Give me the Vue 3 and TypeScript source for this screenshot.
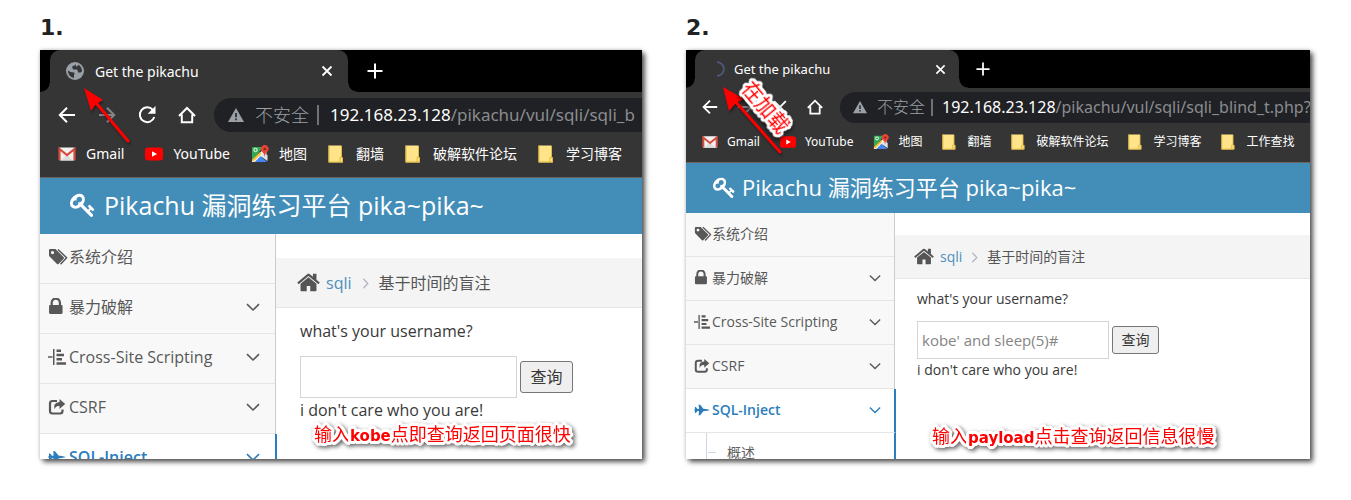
<script setup lang="ts">
interface Bookmark {
  icon: string
  label: string
}

interface Panel {
  id: string
  size: 'large' | 'small'
  heading: string
  loading: boolean
  path: string
  hint: string
  bookmarks: Bookmark[]
  caption: [string, string, string]
}

const baseBookmarks: Bookmark[] = [
  { icon: 'gmail', label: 'Gmail' },
  { icon: 'youtube', label: 'YouTube' },
  { icon: 'maps', label: '地图' },
  { icon: 'folder', label: '翻墙' },
  { icon: 'folder', label: '破解软件论坛' },
  { icon: 'folder', label: '学习博客' },
]

const panels: Panel[] = [
  {
    id: 'fast',
    size: 'large',
    heading: '1.',
    loading: false,
    path: '/pikachu/vul/sqli/sqli_b',
    hint: '',
    bookmarks: baseBookmarks,
    caption: ['输入', 'kobe', '点即查询返回页面很快'],
  },
  {
    id: 'slow',
    size: 'small',
    heading: '2.',
    loading: true,
    path: '/pikachu/vul/sqli/sqli_blind_t.php?n',
    hint: "kobe' and sleep(5)#",
    bookmarks: [...baseBookmarks, { icon: 'folder', label: '工作查找' }],
    caption: ['输入', 'payload', '点击查询返回信息很慢'],
  },
]

const menu = [
  { icon: 'tags', label: '系统介绍', open: false, expands: false },
  { icon: 'lock', label: '暴力破解', open: false, expands: true },
  { icon: 'indent', label: 'Cross-Site Scripting', open: false, expands: true },
  { icon: 'share', label: 'CSRF', open: false, expands: true },
  { icon: 'jet', label: 'SQL-Inject', open: true, expands: true },
]
</script>

<template>
  <svg class="sprite" aria-hidden="true">
    <symbol id="i-globe" viewBox="0 0 18 18">
      <circle cx="9" cy="9" r="9" fill="#9aa0a6" />
      <path d="M2 8.500Q4 10.500 8 10.500Q9.500 11.500 8 13V16Q3 15 2 10ZM10 2Q9 4 6.500 4Q5.500 6 7.500 7.500H11Q12 8.500 12 10.500H14.500L16 9.500Q16 5 12.500 2.800Q11.500 5 9.800 4.500Z" fill="#35363a" />
    </symbol>
    <symbol id="i-spinner" viewBox="0 0 18 18">
      <path d="M9 1.200A7.800 7.800 0 0 1 9 16.800" fill="none" stroke="#4c5a78" stroke-width="2" />
    </symbol>
    <symbol id="i-close" viewBox="0 0 12 12">
      <path d="M1.500 1.500L10.500 10.500M10.500 1.500L1.500 10.500" fill="none" stroke="currentColor" stroke-width="1.800" />
    </symbol>
    <symbol id="i-plus" viewBox="0 0 16 16">
      <path d="M8 .5V15.500M.5 8H15.500" fill="none" stroke="currentColor" stroke-width="2" />
    </symbol>
    <symbol id="i-back" viewBox="0 0 20 20">
      <path d="M18 10H3M10 2.800L2.800 10L10 17.200" fill="none" stroke="currentColor" stroke-width="2" />
    </symbol>
    <symbol id="i-forward" viewBox="0 0 20 20">
      <path d="M2 10H17M10 2.800L17.200 10L10 17.200" fill="none" stroke="#85868a" stroke-width="2" />
    </symbol>
    <symbol id="i-reload" viewBox="0 0 20 20">
      <path d="M15.800 4.800A7.400 7.400 0 1 0 17.300 12" fill="none" stroke="currentColor" stroke-width="2" />
      <path d="M18.500 1V8.800H10.700Z" fill="currentColor" />
    </symbol>
    <symbol id="i-stop" viewBox="0 0 20 20">
      <path d="M3.500 3.500L16.500 16.500M16.500 3.500L3.500 16.500" fill="none" stroke="currentColor" stroke-width="2" />
    </symbol>
    <symbol id="i-house" viewBox="0 0 20 20">
      <path d="M2 11L10 3L18 11M4.800 9.500V17.300H15.200V9.500" fill="none" stroke="currentColor" stroke-width="2" />
    </symbol>
    <symbol id="i-warning" viewBox="0 0 16 16">
      <path d="M8 1L16 15H0Z" fill="#9aa0a6" />
      <path d="M8 6V10.200M8 11.500V13.200" stroke="#202124" stroke-width="1.600" />
    </symbol>
    <symbol id="i-gmail" viewBox="0 0 18 18">
      <rect x="1" y="2.500" width="16" height="13" rx="1" fill="#f2f2f2" />
      <path d="M3 15.500L9 9.500L15 15.500Z" fill="#dcdcdc" />
      <path d="M1.500 15V4L9 10L16.500 4V15" fill="none" stroke="#d54b3d" stroke-width="2.200" />
    </symbol>
    <symbol id="i-youtube" viewBox="0 0 18 18">
      <rect y="2.500" width="18" height="13" rx="3.200" fill="#f00" />
      <path d="M7 6.200V11.800L12 9Z" fill="#fff" />
    </symbol>
    <symbol id="i-maps" viewBox="0 0 18 18">
      <path d="M1 2H12L6 10L1 15Z" fill="#34a853" />
      <path d="M1 15L13 4L16 8L4 17H1Z" fill="#f1f3f4" />
      <path d="M4 17L9.500 11L16 17Z" fill="#4285f4" />
      <path d="M9.500 11L13 8L16.500 10V16Z" fill="#e2e5e8" />
      <path d="M1 15L9 7L10.500 8.500L2 17Z" fill="#fbc02d" />
      <circle cx="4.500" cy="5" r="1.700" fill="none" stroke="#fff" />
      <path d="M13.500 12Q13.500 8.500 11 6.500A3.800 3.800 0 1 1 16.500 6.500Q13.800 8.500 13.500 12Z" fill="#ea4335" />
      <circle cx="13.800" cy="4" r="1.300" fill="#8c251c" />
    </symbol>
    <symbol id="i-folder" viewBox="0 0 18 18">
      <path d="M.5 .5H13.500V12.500H15V17.500H.5Z" fill="#ffe48a" />
      <path d="M1 .5V17H14.500V12.500H12V17M13.500 1V12" fill="none" stroke="#e3b93c" />
    </symbol>
    <symbol id="i-key" viewBox="0 0 1792 1792">
      <path fill="currentColor" d="M832 512q0-80-56-136t-136-56-136 56-56 136q0 42 19 83-41-19-83-19-80 0-136 56t-56 136 56 136 136 56 136-56 56-136q0-42-19-83 41 19 83 19 80 0 136-56t56-136zm851 704q0 17-49 66t-66 49q-9 0-28.500-16t-36.500-33-38.500-40-24.500-26l-96 96 220 220q28 28 28 68 0 42-39 81t-81 39q-40 0-68-28l-671-671q-176 131-365 131-163 0-265.500-102.500t-102.500-265.500q0-160 95-313t248-248 313-95q163 0 265.500 102.500t102.500 265.500q0 189-131 365l355 355 96-96q-3-3-26-24.500t-40-38.500-33-36.500-16-28.500q0-17 49-66t66-49q13 0 23 10 6 6 46 44.500t82 79.500 86.500 86 73 78 28.500 41z" />
    </symbol>
    <symbol id="i-home" viewBox="64 224 1664 1344">
      <path fill="currentColor" d="M1472 992v480q0 26-19 45t-45 19h-384v-384h-256v384h-384q-26 0-45-19t-19-45v-480q0-1 .5-3t.5-3l575-474 575 474q1 2 1 6zm223-69l-62 74q-8 9-21 11h-3q-13 0-21-7l-692-577-692 577q-12 8-24 7-13-2-21-11l-62-74q-8-10-7-23.500t11-21.500l719-599q32-26 76-26t76 26l244 204v-195q0-14 9-23t23-9h192q14 0 23 9t9 23v408l219 182q10 8 11 21.500t-7 23.500z" />
    </symbol>
    <symbol id="i-lock" viewBox="230 180 1344 1536" preserveAspectRatio="xMinYMid meet">
      <path fill="currentColor" d="M640 768h512v-192q0-106-75-181t-181-75-181 75-75 181v192zm832 96v576q0 40-28 68t-68 28h-960q-40 0-68-28t-28-68v-576q0-40 28-68t68-28h32v-192q0-184 132-316t316-132 316 132 132 316v192h32q40 0 68 28t28 68z" />
    </symbol>
    <symbol id="i-tags" viewBox="0 0 20 18" preserveAspectRatio="xMinYMid meet">
      <path fill="currentColor" fill-rule="evenodd" d="M1 2Q1 1 2 1H7.500L15.700 9.200Q16.300 10 15.700 10.700L10.500 16Q9.700 16.700 9 16L1.800 8.800Q1 8 1 7ZM4.500 3A1.600 1.600 0 1 0 4.500 6.200A1.600 1.600 0 1 0 4.500 3Z" />
      <path d="M10 1.500L18.600 9.700L12.500 16.300" fill="none" stroke="currentColor" stroke-width="1.500" />
    </symbol>
    <symbol id="i-indent" viewBox="0 0 18 18" preserveAspectRatio="xMinYMid meet">
      <path fill="currentColor" d="M0 8.200H4.500V9.800H0ZM5 1H6.500V17H5ZM8.500 1.500H13V4H8.500ZM8.500 5.700H16V8.200H8.500ZM8.500 10H14V12.500H8.500ZM8.500 14.200H18V16.700H8.500Z" />
    </symbol>
    <symbol id="i-share" viewBox="0 0 18 18" preserveAspectRatio="xMinYMid meet">
      <path d="M9 3H4.500Q2 3 2 5.500V13Q2 15.500 4.500 15.500H12Q14.500 15.500 14.500 13V11.500" fill="none" stroke="currentColor" stroke-width="2.200" />
      <path d="M11.500 1L17.200 6L11.500 11V8Q7.500 7.500 6.500 11.500Q4.500 4.500 11.500 4Z" fill="currentColor" />
    </symbol>
    <symbol id="i-jet" viewBox="0 0 18 18" preserveAspectRatio="xMinYMid meet">
      <path fill="currentColor" d="M1 5.500H2L4 7.800H5.500V4H5V3.200H7L10.500 7.600L15 8.200L18 9L15 9.800L10.500 10.400L7 14.800H5V14H5.500V10.200H4L2 12.500H1V9.900H.5V8.100H1Z" />
    </symbol>
    <symbol id="i-chevron" viewBox="0 0 14 14">
      <path d="M1 4.200L7 10L13 4.200" fill="none" stroke="currentColor" stroke-width="1.600" />
    </symbol>
  </svg>

  <main class="page">
    <section v-for="p in panels" :key="p.id" class="panel" :class="p.size">
      <h2 class="heading">{{ p.heading }}</h2>
      <div class="frame">
        <div class="screen">
          <div class="tabs">
            <div class="tab">
              <svg class="favicon"><use :href="p.loading ? '#i-spinner' : '#i-globe'" /></svg>
              <span class="tab-title">Get the pikachu</span>
              <button class="plain" type="button" aria-label="Close tab">
                <svg class="close"><use href="#i-close" /></svg>
              </button>
            </div>
            <button class="plain" type="button" aria-label="New tab">
              <svg class="plus"><use href="#i-plus" /></svg>
            </button>
          </div>

          <div class="toolbar">
            <div class="nav">
              <button class="plain" type="button" aria-label="Back"><svg><use href="#i-back" /></svg></button>
              <button class="plain" type="button" aria-label="Forward"><svg><use href="#i-forward" /></svg></button>
              <button class="plain" type="button" :aria-label="p.loading ? 'Stop' : 'Reload'">
                <svg><use :href="p.loading ? '#i-stop' : '#i-reload'" /></svg>
              </button>
              <button class="plain" type="button" aria-label="Home"><svg><use href="#i-house" /></svg></button>
            </div>
            <div class="address">
              <svg class="warning"><use href="#i-warning" /></svg>
              <span class="insecure">不安全</span>
              <span class="url"><b>192.168.23.128</b>{{ p.path }}</span>
            </div>
          </div>

          <nav class="bookmarks" aria-label="Bookmarks">
            <a v-for="b in p.bookmarks" :key="b.label" href="#">
              <svg><use :href="'#i-' + b.icon" /></svg>{{ b.label }}
            </a>
          </nav>

          <header class="banner">
            <svg><use href="#i-key" /></svg>
            <span>Pikachu 漏洞练习平台 pika~pika~</span>
          </header>

          <div class="body">
            <aside class="sidebar">
              <a v-for="m in menu" :key="m.label" href="#" class="item" :class="{ open: m.open }">
                <svg class="item-icon"><use :href="'#i-' + m.icon" /></svg>
                <span class="item-label">{{ m.label }}</span>
                <svg v-if="m.expands" class="chevron"><use href="#i-chevron" /></svg>
              </a>
              <div v-if="p.loading" class="submenu"><a href="#">概述</a></div>
            </aside>

            <div class="content">
              <div class="crumbs">
                <svg class="crumb-home"><use href="#i-home" /></svg>
                <a href="#">sqli</a>
                <svg class="crumb-sep"><use href="#i-chevron" /></svg>
                <span>基于时间的盲注</span>
              </div>
              <form class="query" @submit.prevent>
                <label :for="'name-' + p.id">what's your username?</label>
                <div class="fields">
                  <input :id="'name-' + p.id" type="text" :value="p.hint" />
                  <button type="submit">查询</button>
                </div>
                <p>i don't care who you are!</p>
              </form>
            </div>
          </div>

          <svg v-if="!p.loading" class="arrow" viewBox="0 0 120 120" aria-hidden="true">
            <path d="M57 54L88 91" stroke="#f00" stroke-width="3" stroke-linecap="round" />
            <path d="M44 38L63 50L56 54L51 61Z" fill="#f00" />
          </svg>
          <svg v-else class="arrow" viewBox="0 0 120 120" aria-hidden="true">
            <path d="M49 51L94 102" stroke="#f00" stroke-width="3" stroke-linecap="round" />
            <path d="M37 37L58 49L50 53L43 61Z" fill="#f00" />
          </svg>
          <span v-if="p.loading" class="note tilted">在加载</span>
          <span class="note caption">{{ p.caption[0] }}<b>{{ p.caption[1] }}</b>{{ p.caption[2] }}</span>
        </div>
      </div>
    </section>
  </main>
</template>

<style>
body {
  margin: 0;
  background: #fff;
}
</style>

<style scoped>
.sprite {
  position: absolute;
  width: 0;
  height: 0;
}

.page {
  box-sizing: border-box;
  height: 100vh;
  min-height: 400px;
  padding: 5px 41px 41px 40px;
  display: grid;
  grid-template-columns: minmax(0, 602fr) minmax(0, 624fr);
  gap: 44px;
  font-family: "Open Sans", "Noto Sans CJK SC", sans-serif;
}

.panel {
  display: flex;
  flex-direction: column;
  min-height: 0;
}

.large {
  --tabs-h: 42px;
  --tab-w: 298px;
  --tab-x: 10px;
  --tab-pad: 16px;
  --favicon: 18px;
  --title-gap: 11px;
  --ui: 14px;
  --close: 12px;
  --plus: 16px;
  --tool-h: 45px;
  --nav: 20px;
  --nav-gap: 20px;
  --nav-x: 17px;
  --pill-gap: 17px;
  --pill-h: 34px;
  --url: 17px;
  --insecure: 18px;
  --mark: 18px;
  --mark-gap: 10px;
  --mark-space: 21px;
  --mark-h: 41px;
  --banner-h: 56px;
  --banner: 25px;
  --key: 26px;
  --banner-x: 30px;
  --side-w: 235px;
  --row: 50px;
  --row-foot: 3px;
  --text: 16px;
  --item-icon: 21px;
  --item-icon-h: 18px;
  --chev: 14px;
  --top: 24px;
  --crumb-x: 21px;
  --crumb-home: 23px;
  --crumb-space: 8px;
  --form-x: 24px;
  --label-h: 46px;
  --input-w: 217px;
  --input-h: 42px;
  --btn-w: 53px;
  --btn-h: 32px;
}

.small {
  --tabs-h: 38px;
  --tab-w: 264px;
  --tab-x: 9px;
  --tab-pad: 14px;
  --favicon: 16px;
  --title-gap: 9px;
  --ui: 12px;
  --close: 11px;
  --plus: 14px;
  --tool-h: 38px;
  --nav: 18px;
  --nav-gap: 17px;
  --nav-x: 15px;
  --pill-gap: 16px;
  --pill-h: 31px;
  --url: 16px;
  --insecure: 16px;
  --mark: 16px;
  --mark-gap: 9px;
  --mark-space: 20px;
  --mark-h: 37px;
  --banner-h: 50px;
  --banner: 22px;
  --key: 23px;
  --banner-x: 27px;
  --side-w: 208px;
  --row: 44px;
  --row-foot: 2px;
  --text: 14px;
  --item-icon: 18px;
  --item-icon-h: 16px;
  --chev: 12px;
  --top: 22px;
  --crumb-x: 19px;
  --crumb-home: 20px;
  --crumb-space: 7px;
  --form-x: 22px;
  --label-h: 40px;
  --input-w: 192px;
  --input-h: 38px;
  --btn-w: 47px;
  --btn-h: 28px;
}

.heading {
  flex: none;
  margin: 0;
  height: 45px;
  font: bold 22px/45px "DejaVu Sans", sans-serif;
  color: #222;
}

.frame {
  flex: 1;
  min-height: 0;
  box-shadow: 0 0 4px rgba(0, 0, 0, 0.2), 3px 3px 5px rgba(0, 0, 0, 0.65);
}

.screen {
  position: relative;
  height: 100%;
  overflow: hidden;
  display: flex;
  flex-direction: column;
  background: #fff;
}

.plain {
  display: flex;
  padding: 0;
  border: 0;
  background: none;
  color: inherit;
}

.tabs {
  flex: none;
  height: var(--tabs-h);
  display: flex;
  align-items: center;
  gap: 19px;
  padding-left: var(--tab-x);
  background: #000;
  color: #fff;
}

.small .tabs {
  gap: 17px;
}

.tab {
  position: relative;
  box-sizing: border-box;
  width: var(--tab-w);
  height: 100%;
  display: flex;
  align-items: center;
  gap: var(--title-gap);
  padding: 0 15px 0 var(--tab-pad);
  border-radius: 10px 10px 0 0;
  background: #353535;
}

.small .tab {
  padding-right: 13px;
}

.tab::before,
.tab::after {
  content: "";
  position: absolute;
  bottom: 0;
  width: 9px;
  height: 9px;
}

.tab::before {
  right: 100%;
  background: radial-gradient(circle at 0 0, #000 8px, #353535 9px);
}

.tab::after {
  left: 100%;
  background: radial-gradient(circle at 100% 0, #000 8px, #353535 9px);
}

.favicon {
  width: var(--favicon);
  height: var(--favicon);
}

.tab-title {
  flex: 1;
  font-family: "Noto Sans", sans-serif;
  font-size: var(--ui);
}

.small .tab-title {
  font-size: 13px;
}

.close {
  width: var(--close);
  height: var(--close);
}

.plus {
  width: var(--plus);
  height: var(--plus);
}

.toolbar {
  flex: none;
  height: var(--tool-h);
  display: flex;
  align-items: center;
  gap: var(--pill-gap);
  padding-left: var(--nav-x);
  background: #353535;
  color: #fff;
}

.nav {
  flex: none;
  display: flex;
  gap: var(--nav-gap);
}

.nav svg {
  width: var(--nav);
  height: var(--nav);
}

.address {
  flex: 1;
  min-width: 0;
  height: var(--pill-h);
  display: flex;
  align-items: center;
  overflow: hidden;
  white-space: nowrap;
  padding-left: 14px;
  border-radius: 17px 0 0 17px;
  background: #202124;
  color: #9aa0a6;
  font-family: "Noto Sans", "Noto Sans CJK SC", sans-serif;
}

.warning {
  flex: none;
  width: 16px;
  height: 16px;
  margin-right: 11px;
}

.insecure {
  font-size: var(--insecure);
  line-height: 20px;
  font-weight: 300;
  padding-right: 8px;
  border-right: 2px solid #6f7276;
  margin-right: 11px;
}

.small .address {
  padding-left: 13px;
}

.small .warning {
  width: 14px;
  height: 14px;
  margin-right: 10px;
}

.small .insecure {
  line-height: 17px;
  padding-right: 6px;
  margin-right: 9px;
}

.url {
  font-size: var(--url);
  color: #8a8c90;
}

.url b {
  font-weight: 400;
  color: #fff;
}

.bookmarks {
  flex: none;
  box-sizing: border-box;
  height: var(--mark-h);
  display: flex;
  align-items: center;
  gap: var(--mark-space);
  padding: 0 0 6px 18px;
  border-bottom: 1px solid #6b655f;
  background: #353535;
  font-family: "Noto Sans", "Noto Sans CJK SC", sans-serif;
  font-size: var(--ui);
  line-height: 20px;
  white-space: nowrap;
}

.small .bookmarks {
  padding: 0 0 4px 16px;
}

.bookmarks a {
  display: flex;
  align-items: center;
  gap: var(--mark-gap);
  color: #fff;
  text-decoration: none;
}

.bookmarks svg {
  width: var(--mark);
  height: var(--mark);
}

.banner {
  flex: none;
  box-sizing: border-box;
  height: var(--banner-h);
  display: flex;
  align-items: center;
  gap: 8px;
  padding: 0 0 2px var(--banner-x);
  background: #438eb9;
  color: #fff;
  font-size: var(--banner);
  line-height: 32px;
  white-space: nowrap;
}

.banner svg {
  width: var(--key);
  height: var(--key);
}

.small .banner {
  gap: 6px;
}

.body {
  flex: 1;
  min-height: 0;
  display: flex;
  font-size: var(--text);
  line-height: 24px;
  color: #393939;
}

.sidebar {
  flex: none;
  box-sizing: border-box;
  width: calc(var(--side-w) + 1px);
  border-right: 1px solid #ccc;
}

.item {
  box-sizing: border-box;
  height: var(--row);
  display: flex;
  align-items: center;
  padding: 0 15px var(--row-foot) 8px;
  border-bottom: 1px solid #e5e5e5;
  background: #f8f8f8;
  color: #585858;
  text-decoration: none;
  white-space: nowrap;
}

.small .item {
  padding-right: 13px;
}

.item-icon {
  flex: none;
  width: var(--item-icon);
  height: var(--item-icon-h);
}

.item-label {
  flex: 1;
}

.chevron {
  width: var(--chev);
  height: var(--chev);
}

.item.open,
.submenu {
  margin-right: -2px;
  border-right: 2px solid #2b7dbc;
  background: #fff;
}

.item.open {
  color: #2b7dbc;
  font-weight: 600;
}

.submenu {
  position: relative;
  height: 80px;
  padding-left: 41px;
  line-height: 40px;
}

.submenu::before {
  content: "";
  position: absolute;
  left: 22px;
  top: 19px;
  width: 8px;
  border-top: 1px solid #ccd7e2;
}

.submenu::after {
  content: "";
  position: absolute;
  left: 20px;
  top: 0;
  bottom: 0;
  border-left: 1px solid #ccd7e2;
}

.submenu a {
  color: #616161;
  text-decoration: none;
}

.content {
  flex: 1;
  min-width: 0;
  padding-top: var(--top);
}

.crumbs {
  box-sizing: border-box;
  height: var(--row);
  display: flex;
  align-items: center;
  padding-left: var(--crumb-x);
  border-bottom: 1px solid #e5e5e5;
  background: #f4f4f4;
  color: #555;
  white-space: nowrap;
}

.crumbs a {
  color: #4c8fbd;
  text-decoration: none;
}

.crumb-home {
  width: var(--crumb-home);
  height: 19px;
  margin-right: 6px;
}

.crumb-sep {
  width: 11px;
  height: 11px;
  margin: 2px var(--crumb-space) 0;
  color: #b2b6bf;
  transform: rotate(-90deg);
}

.query {
  padding-left: var(--form-x);
}

.query label {
  display: block;
  height: var(--label-h);
  line-height: var(--label-h);
}

.fields {
  display: flex;
  align-items: center;
  gap: 3px;
  margin-top: 2px;
}

.fields input {
  box-sizing: border-box;
  width: var(--input-w);
  height: var(--input-h);
  padding: 0 4px;
  border: 1px solid #d5d5d5;
  border-radius: 0;
  background: #fff;
  color: #858585;
  font: inherit;
}

.small .fields input {
  font-size: 15px;
}

.fields button {
  box-sizing: border-box;
  width: var(--btn-w);
  height: var(--btn-h);
  padding: 0;
  border: 1px solid #767676;
  border-radius: 3px;
  background: #efefef;
  color: #393939;
  font: inherit;
}

.query p {
  margin: 0;
}

.small .query p {
  line-height: 22px;
}

.arrow {
  position: absolute;
  left: 0;
  top: 0;
  width: 120px;
  height: 120px;
  filter: drop-shadow(1px 2px 1px rgba(0, 0, 0, 0.4));
}

.note {
  position: absolute;
  color: #f00;
  font-family: "Noto Sans CJK SC", sans-serif;
  font-size: 18px;
  line-height: 24px;
  white-space: nowrap;
  text-shadow:
    3px 0 #fff, -3px 0 #fff, 0 3px #fff, 0 -3px #fff,
    2px 2px #fff, -2px 2px #fff, 2px -2px #fff, -2px -2px #fff,
    1px 3px #fff, -1px 3px #fff, 1px -3px #fff, -1px -3px #fff,
    3px 1px #fff, -3px 1px #fff, 3px -1px #fff, -3px -1px #fff;
  filter: drop-shadow(2px 2px 2px rgba(0, 0, 0, 0.6));
}

.note b {
  font-family: "DejaVu Sans", sans-serif;
  font-size: 15px;
}

.caption {
  left: 274px;
  bottom: 11px;
}

.small .caption {
  left: 246px;
  bottom: 9px;
}

.tilted {
  left: 50px;
  top: 45px;
  width: 60px;
  font-size: 20px;
  transform: rotate(50deg);
}
</style>
